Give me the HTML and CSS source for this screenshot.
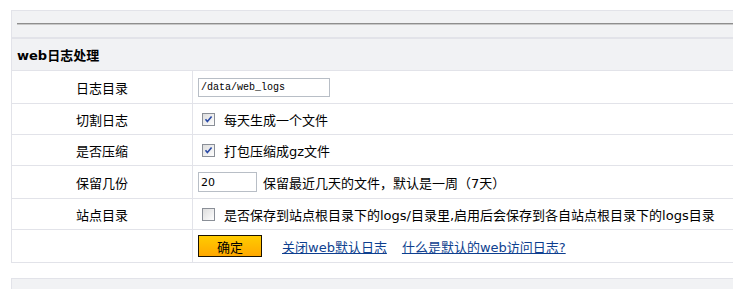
FILE: index.html
```html
<!DOCTYPE html>
<html>
  <head>
    <meta charset="utf-8">
    <title>web日志处理</title>
    <link rel="stylesheet" href="styles.css">
  </head>
  <body>
    <div class="bar bar-top">
      <div class="rule"></div>
    </div>
    <div class="panel">
      <div class="panel-title">web日志处理</div>
      <div class="row tall">
        <div class="label">日志目录</div>
        <div class="field">
          <input class="text-input" type="text" value="/data/web_logs">
        </div>
      </div>
      <div class="row">
        <div class="label">切割日志</div>
        <div class="field">
          <span class="check">
            <svg width="13" height="13" viewBox="0 0 13 13">
              <defs>
                <linearGradient id="boxFill" x1="0" y1="0" x2="1" y2="1">
                  <stop offset="0" stop-color="#dcdcdc"/>
                  <stop offset="1" stop-color="#ffffff"/>
                </linearGradient>
              </defs>
              <rect x="0.5" y="0.5" width="12" height="12" fill="url(#boxFill)" stroke="#8a8f97"/>
              <path d="M3.5 6.2 L5.4 8.6 L9.6 3.6" fill="none" stroke="#2a4aa6" stroke-width="1.6"/>
            </svg>
          </span>
          <span class="note">每天生成一个文件</span>
        </div>
      </div>
      <div class="row">
        <div class="label">是否压缩</div>
        <div class="field">
          <span class="check">
            <svg width="13" height="13" viewBox="0 0 13 13">
              <rect x="0.5" y="0.5" width="12" height="12" fill="url(#boxFill)" stroke="#8a8f97"/>
              <path d="M3.5 6.2 L5.4 8.6 L9.6 3.6" fill="none" stroke="#2a4aa6" stroke-width="1.6"/>
            </svg>
          </span>
          <span class="note">打包压缩成gz文件</span>
        </div>
      </div>
      <div class="row tall">
        <div class="label">保留几份</div>
        <div class="field">
          <input class="num-input" type="text" value="20">
          <span class="note note-tight">保留最近几天的文件，默认是一周（7天）</span>
        </div>
      </div>
      <div class="row">
        <div class="label">站点目录</div>
        <div class="field">
          <span class="check">
            <svg width="13" height="13" viewBox="0 0 13 13">
              <rect x="0.5" y="0.5" width="12" height="12" fill="url(#boxFill)" stroke="#8a8f97"/>
            </svg>
          </span>
          <span class="note">是否保存到站点根目录下的logs/目录里,启用后会保存到各自站点根目录下的logs目录</span>
        </div>
      </div>
      <div class="row tall">
        <div class="label"></div>
        <div class="field">
          <button class="ok" type="button">确定</button>
          <a class="link first" href="#">关闭web默认日志</a>
          <a class="link" href="#">什么是默认的web访问日志?</a>
        </div>
      </div>
    </div>
    <div class="bar bar-bottom"></div>
  </body>
</html>
```

FILE: styles.css
```css
html, body {
  margin: 0;
  overflow: hidden;
}
body {
  padding: 10px 0 0 11px;
  font-family: "DejaVu Sans", "Noto Sans CJK SC", sans-serif;
  font-size: 13px;
  color: #000;
  background: #fff;
}
.bar {
  width: 722px;
  box-sizing: border-box;
  background: #f1f2f4;
  border: 1px solid #e2e3e9;
  border-right: 0;
  border-bottom: 0;
}
.bar-top {
  height: 27px;
  padding: 12px 0 0 5px;
}
.rule {
  height: 0;
  border-top: 1px solid #8e8e8e;
  border-bottom: 1px solid #c8c8c8;
}
.bar-bottom {
  height: 12px;
  margin-top: 15px;
}
.panel {
  width: 722px;
  box-sizing: border-box;
  border: 1px solid #e2e3e9;
  border-top: 2px solid #e2e3e9;
  border-right: 0;
  border-bottom: 0;
}
.panel-title {
  display: flex;
  align-items: center;
  height: 31px;
  padding-left: 5px;
  background: #f1f2f4;
  border-bottom: 1px solid #e2e3e9;
  font-weight: bold;
  font-size: 13px;
}
.row {
  display: grid;
  grid-template-columns: 181px 1fr;
  height: 31px;
  box-sizing: border-box;
  border-bottom: 1px solid #e2e3e9;
}
.row.tall {
  height: 33px;
}
.label {
  display: flex;
  align-items: center;
  justify-content: center;
  border-right: 1px solid #e2e3e9;
}
.field {
  display: flex;
  align-items: center;
  padding-left: 5px;
  white-space: nowrap;
  overflow: hidden;
}
.text-input {
  width: 132px;
  height: 19px;
  box-sizing: border-box;
  margin: 0;
  padding: 0 0 0 2px;
  border: 1px solid #b8bec6;
  font-family: "Liberation Mono", monospace;
  font-size: 10px;
  color: #000;
}
.num-input {
  width: 59px;
  height: 20px;
  box-sizing: border-box;
  margin: 0;
  padding: 0 0 0 2px;
  border: 1px solid #b8bec6;
  font-family: "DejaVu Sans", sans-serif;
  font-size: 11px;
  color: #000;
}
.check {
  display: flex;
  margin-left: 4px;
}
.note {
  margin-left: 9px;
}
.note-tight {
  margin-left: 6px;
}
.ok {
  width: 64px;
  height: 22px;
  margin: 0;
  padding: 0;
  border: 1px solid #1a1200;
  background: linear-gradient(#ffcc00, #ffa800);
  font-family: "Noto Sans CJK SC", sans-serif;
  font-size: 13px;
  color: #000;
}
.link {
  margin-left: 15px;
  color: #0e3f8f;
  text-decoration: underline;
}
.link.first {
  margin-left: 20px;
}
```
